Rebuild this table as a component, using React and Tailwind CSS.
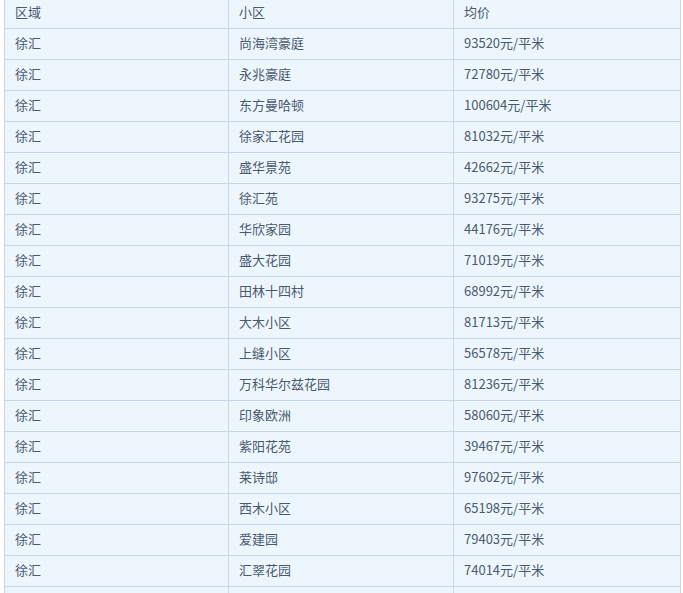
import React from 'react';

const rows = [
    ['徐汇', '尚海湾豪庭', '93520元/平米'],
    ['徐汇', '永兆豪庭', '72780元/平米'],
    ['徐汇', '东方曼哈顿', '100604元/平米'],
    ['徐汇', '徐家汇花园', '81032元/平米'],
    ['徐汇', '盛华景苑', '42662元/平米'],
    ['徐汇', '徐汇苑', '93275元/平米'],
    ['徐汇', '华欣家园', '44176元/平米'],
    ['徐汇', '盛大花园', '71019元/平米'],
    ['徐汇', '田林十四村', '68992元/平米'],
    ['徐汇', '大木小区', '81713元/平米'],
    ['徐汇', '上缝小区', '56578元/平米'],
    ['徐汇', '万科华尔兹花园', '81236元/平米'],
    ['徐汇', '印象欧洲', '58060元/平米'],
    ['徐汇', '紫阳花苑', '39467元/平米'],
    ['徐汇', '莱诗邸', '97602元/平米'],
    ['徐汇', '西木小区', '65198元/平米'],
    ['徐汇', '爱建园', '79403元/平米'],
    ['徐汇', '汇翠花园', '74014元/平米'],
    ['', '', ''],
];

const Row = ({ cells }) => (
    <div className="grid grid-cols-[224px_225px_227px]">
        {cells.map((c, i) => (
            <div
                key={i}
                className="h-[31px] flex items-center px-[10px] pb-[2px] border-b border-r border-[#c9d8e7]"
            >
                {c}
            </div>
        ))}
    </div>
);

const App = () => {
    return (
        <div className="w-[683px] h-[593px] overflow-hidden bg-white">
            <div
                className="ml-[4px] -mt-[3px] w-[677px] border-l border-t border-[#c9d8e7] bg-[#eef6fd] text-[13px] text-[#4a5a6e]"
                style={{ fontFamily: '"Noto Sans CJK SC", "Noto Sans", sans-serif' }}
            >
                <Row cells={['区域', '小区', '均价']} />
                {rows.map((r, i) => (
                    <Row key={i} cells={r} />
                ))}
            </div>
        </div>
    );
};

export default App;
